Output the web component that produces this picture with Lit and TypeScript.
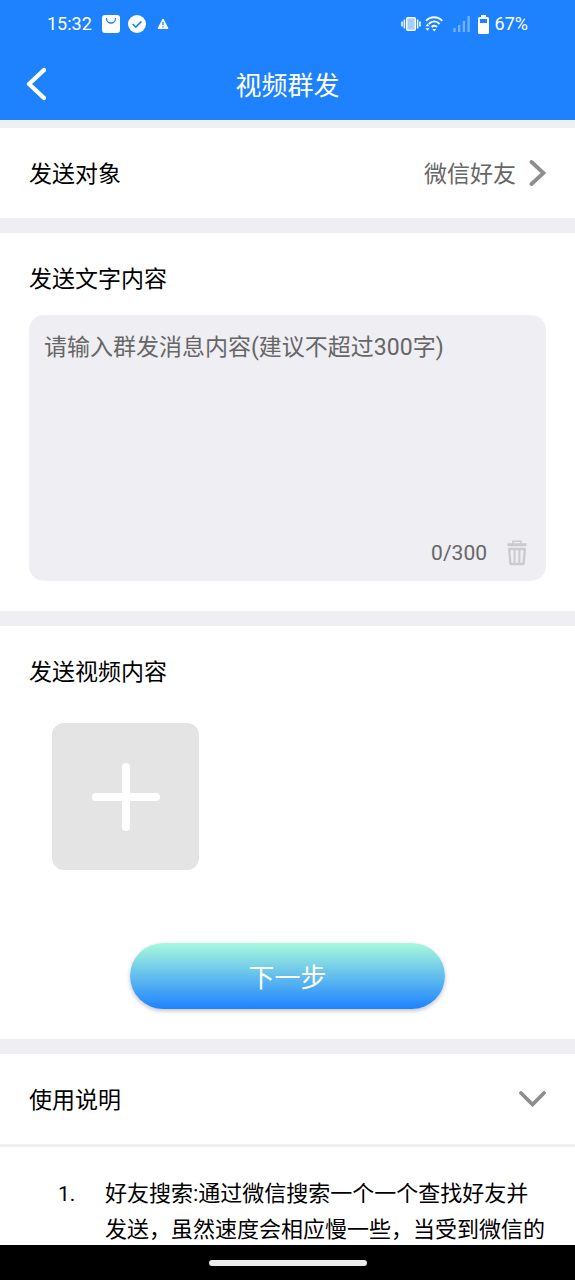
import { LitElement, html, css } from "lit";
import { customElement, state } from "lit/decorators.js";

@customElement("status-bar")
class StatusBar extends LitElement {
  static styles = css`
    :host {
      display: flex;
      align-items: center;
      justify-content: space-between;
      height: 48px;
      padding: 0 47px;
      color: #fff;
      font-size: 18px;
    }
    .group {
      display: flex;
      align-items: center;
    }
    .left {
      gap: 8px;
    }
    .right {
      gap: 6px;
    }
    .radio {
      gap: 4px;
    }
    .time {
      margin-right: 2px;
    }
    svg {
      display: block;
      flex: none;
    }
  `;

  render() {
    return html`
      <div class="group left">
        <span class="time">15:32</span>
        <svg width="18" height="18" viewBox="0 0 18 18" aria-hidden="true">
          <rect width="18" height="18" rx="3" fill="#fff" />
          <path d="M4.5 3.5a4.5 4.5 0 0 0 9 0" fill="none" stroke="#1e82ff" stroke-width="1.3" stroke-linecap="round" />
        </svg>
        <svg width="18" height="18" viewBox="0 0 18 18" aria-hidden="true">
          <circle cx="9" cy="9" r="9" fill="#fff" />
          <path d="M4.6 9l3.2 3.1 5.6-5.7" fill="none" stroke="#1e82ff" stroke-width="1.6" />
        </svg>
        <svg width="18" height="18" viewBox="0 0 18 18" aria-hidden="true">
          <path d="M9 4l5 9.4H4z" fill="#fff" stroke="#fff" stroke-linejoin="round" />
          <path d="M9 6.8v3.4M9 11.2v1.3" stroke="#1e82ff" stroke-width="1.3" />
        </svg>
      </div>
      <div class="group right">
        <div class="group radio">
          <svg width="20" height="16" viewBox="0 0 20 16" aria-hidden="true">
            <rect x="5.7" y="1.7" width="8.6" height="12.6" rx="1" fill="#a5cdff" stroke="#fff" stroke-width="1.4" />
            <path d="M3.4 3.5v9M16.6 3.5v9M1 5.5v5M19 5.5v5" stroke="#fff" stroke-width="1.5" />
          </svg>
          <svg width="18" height="16" viewBox="0 0 18 16" aria-hidden="true">
            <path d="M1 4.9C5.6.1 12.8.1 17.2 4.9M3.8 8c3.2-3.2 7.6-3.2 10.8 0M6.6 11c1.7-1.5 3.6-1.5 5.3 0" fill="none" stroke="#fff" stroke-width="2" />
            <path d="M9.3 15.400l-2-2.400h4zM2.500 7.600l2 2.600h-4zM2.500 14.800l2-2.600h-4z" fill="#fff" />
          </svg>
        </div>
        <svg width="23" height="16" viewBox="0 0 23 16" aria-hidden="true">
          <path d="M5.5 12v4M10.2 9v7M14.9 5v11M19.6 0v16" stroke="#6fb0ff" stroke-width="2.4" />
        </svg>
        <svg width="11" height="19" viewBox="0 0 11 19" aria-hidden="true">
          <path d="M3 0h5v2h1.5A1.5 1.5 0 0 1 11 3.5v14A1.5 1.5 0 0 1 9.5 19h-8A1.5 1.5 0 0 1 0 17.5v-14A1.5 1.5 0 0 1 1.5 2H3z" fill="#fff" />
          <rect x="2" y="4" width="7" height="4" fill="#1e82ff" />
        </svg>
        <span>67%</span>
      </div>
    `;
  }
}

@customElement("app-root")
class AppRoot extends LitElement {
  @state() private message = "";
  @state() private open = true;

  static styles = css`
    :host {
      display: flex;
      flex-direction: column;
      height: 100vh;
      overflow: hidden;
      background: #efeef3;
      color: #000;
      font-family: Roboto, "Noto Sans CJK SC", sans-serif;
      font-size: 23px;
      line-height: 36px;
    }
    * {
      box-sizing: border-box;
    }
    button {
      border: 0;
      padding: 0;
      background: none;
      color: inherit;
      font: inherit;
      cursor: pointer;
    }
    svg {
      display: block;
      flex: none;
    }
    h1,
    h2 {
      margin: 0;
      font-weight: 400;
    }
    h2 {
      font-size: 23px;
    }
    .top {
      flex: none;
      background: #1e82ff;
      color: #fff;
    }
    .bar {
      display: grid;
      grid-template-columns: 48px 1fr 48px;
      align-items: center;
      height: 72px;
      padding: 0 12px;
    }
    .back {
      display: grid;
      place-items: center;
      height: 48px;
    }
    .bar h1 {
      padding-top: 3px;
      font-size: 26px;
      text-align: center;
    }
    main {
      flex: 1;
      min-height: 0;
      overflow: hidden;
      display: flex;
      flex-direction: column;
      gap: 15px;
      padding-top: 8px;
    }
    .row,
    .card,
    .help {
      flex: none;
      background: #fff;
    }
    .row {
      display: flex;
      align-items: center;
      justify-content: space-between;
      width: 100%;
      height: 90px;
      padding: 0 29px;
      text-align: left;
    }
    .label {
      padding-top: 3px;
    }
    .value {
      display: flex;
      align-items: center;
      gap: 13px;
      color: #666;
    }
    .card {
      padding: 29px 29px 30px;
    }
    .box {
      display: flex;
      flex-direction: column;
      height: 266px;
      margin-top: 17px;
      border-radius: 15px;
      background: #efeef3;
    }
    textarea {
      flex: 1;
      width: 100%;
      padding: 15px 15px 0;
      border: 0;
      outline: 0;
      resize: none;
      background: none;
      color: #000;
      font: inherit;
    }
    textarea::placeholder {
      color: #666;
      opacity: 1;
    }
    .tools {
      display: flex;
      align-items: center;
      justify-content: flex-end;
      gap: 20px;
      padding: 0 19px 10px;
      color: #666;
      font-size: 21px;
    }
    .add {
      display: grid;
      place-items: center;
      width: 147px;
      height: 147px;
      margin: 32px 23px 0;
      border-radius: 12px;
      background: #e4e4e4;
    }
    .next {
      display: block;
      width: 61%;
      height: 66px;
      margin: 73px auto 0;
      padding-top: 3px;
      border-radius: 33px;
      background: linear-gradient(#a8fadb, #1e82ff);
      box-shadow: 0 2px 4px rgba(60, 50, 90, 0.3);
      color: #fff;
      font-size: 26px;
    }
    .help ol {
      margin: 0;
      padding: 29px 29px 28px 58px;
      border-top: 3px solid #efeff0;
      list-style: none;
      font-size: 22px;
    }
    .help li {
      display: grid;
      grid-template-columns: 47px 1fr;
    }
    .num {
      font-size: 21px;
    }
    .navigation {
      flex: none;
      display: grid;
      place-items: center;
      height: 35px;
      background: #000;
    }
    .handle {
      width: 158px;
      height: 6px;
      border-radius: 3px;
      background: #ececec;
    }
  `;

  render() {
    return html`
      <header class="top">
        <status-bar></status-bar>
        <div class="bar">
          <button class="back" aria-label="返回">
            <svg width="20" height="34" viewBox="0 0 20 34">
              <path d="M18 3L3 17 18 31" fill="none" stroke="#fff" stroke-width="4.4" stroke-linecap="round" stroke-linejoin="round" />
            </svg>
          </button>
          <h1>视频群发</h1>
        </div>
      </header>
      <main>
        <button class="row">
          <span class="label">发送对象</span>
          <span class="value">
            <span class="label">微信好友</span>
            <svg width="17" height="26" viewBox="0 0 17 26">
              <path d="M2.5 2l12 11-12 11" fill="none" stroke="#8e8e8e" stroke-width="3.8" stroke-linecap="round" />
            </svg>
          </span>
        </button>
        <section class="card">
          <h2><label for="message">发送文字内容</label></h2>
          <div class="box">
            <textarea
              id="message"
              maxlength="300"
              placeholder="请输入群发消息内容(建议不超过300字)"
              .value=${this.message}
              @input=${(e: Event) => (this.message = (e.target as HTMLTextAreaElement).value)}
            ></textarea>
            <div class="tools">
              <span>${this.message.length}/300</span>
              <button aria-label="清空" @click=${() => (this.message = "")}>
                <svg width="20" height="26" viewBox="0 0 20 26">
                  <g fill="none" stroke="#cbcbcd" stroke-width="2">
                    <path d="M6 4V1.2h8V4" stroke-width="1.6" />
                    <path d="M.5 4.7h19" stroke-width="3" />
                    <path d="M2.2 9h15.6l-1.2 15H3.4z" stroke-width="2.4" stroke-linejoin="round" />
                    <path d="M7.6 9v14M12.4 9v14" />
                  </g>
                </svg>
              </button>
            </div>
          </div>
        </section>
        <section class="card">
          <h2>发送视频内容</h2>
          <button class="add" aria-label="添加视频">
            <svg width="68" height="68" viewBox="0 0 68 68">
              <path d="M34 4v60M4 34h60" stroke="#fff" stroke-width="8" stroke-linecap="round" />
            </svg>
          </button>
          <button class="next">下一步</button>
        </section>
        <section class="help">
          <button class="row" aria-expanded=${this.open} @click=${() => (this.open = !this.open)}>
            <span class="label">使用说明</span>
            <svg width="27" height="16" viewBox="0 0 27 16">
              <path d="M2 2l11.5 11.5L25 2" fill="none" stroke="#8e8e8e" stroke-width="3.8" stroke-linecap="round" />
            </svg>
          </button>
          ${this.open
            ? html`<ol>
                <li>
                  <span class="num">1.</span>
                  <span>好友搜索:通过微信搜索一个一个查找好友并发送，虽然速度会相应慢一些，当受到微信的</span>
                </li>
              </ol>`
            : null}
        </section>
      </main>
      <footer class="navigation"><div class="handle"></div></footer>
    `;
  }
}
